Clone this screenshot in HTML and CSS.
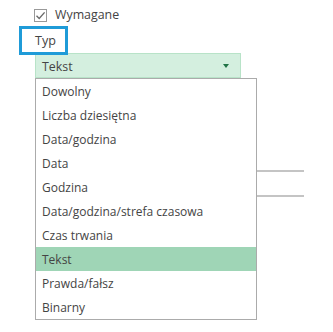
FILE: index.html
```html
<!DOCTYPE html>
<html lang="pl">
<head>
<meta charset="utf-8">
<link rel="stylesheet" href="styles.css">
</head>
<body>
<div class="panel">
  <label class="check-row">
    <span class="checkbox">
      <svg width="11" height="11" viewBox="0 0 11 11"><path d="M1.5 5.8 L4.2 8.4 L9.6 2.4" fill="none" stroke="#6a6a6a" stroke-width="1.4"/></svg>
    </span>
    <span class="check-label">Wymagane</span>
  </label>
  <div class="type-label">Typ</div>
  <div class="dropdown">
    <div class="select">
      <span>Tekst</span>
      <span class="arrow"></span>
    </div>
    <div class="menu-wrap">
      <ul class="menu">
        <li>Dowolny</li>
        <li>Liczba dziesiętna</li>
        <li>Data/godzina</li>
        <li>Data</li>
        <li>Godzina</li>
        <li>Data/godzina/strefa czasowa</li>
        <li>Czas trwania</li>
        <li class="selected">Tekst</li>
        <li>Prawda/fałsz</li>
        <li>Binarny</li>
      </ul>
      <div class="side-lines">
        <div class="side-line first"></div>
        <div class="side-line"></div>
      </div>
    </div>
  </div>
</div>
</body>
</html>
```
FILE: styles.css
```css
* { box-sizing: border-box; }
html, body { margin: 0; padding: 0; background: #fff; }
body {
  font-family: "Open Sans", "Noto Sans", sans-serif;
  font-size: 12px;
  color: #444;
}
.panel {
  padding: 8px 0 0 34px;
  width: 333px;
  height: 332px;
  overflow: hidden;
}
.check-row {
  display: flex;
  align-items: center;
  height: 14px;
  gap: 8px;
}
.checkbox {
  width: 13px;
  height: 13px;
  border: 1px solid #999;
  display: flex;
  align-items: center;
  justify-content: center;
  background: #fff;
}
.check-label { font-size: 12.4px; line-height: 14px; color: #444; }
.type-label {
  margin: 4px 0 0 -15px;
  width: 49px;
  height: 29px;
  border: 3px solid #1f9bd8;
  padding: 3px 0 0 13px;
  font-size: 12.6px;
  line-height: 18px;
  color: #444;
  position: relative;
  z-index: 1;
}
.dropdown { margin-top: -2px; margin-left: 1px; }
.select {
  width: 206px;
  height: 25px;
  background: #d4efdf;
  border: 1px solid #b8e3c8;
  display: flex;
  align-items: center;
  justify-content: space-between;
  padding: 1px 11px 0 6px;
  font-size: 12.4px;
}
.arrow {
  width: 0;
  height: 0;
  border-left: 3px solid transparent;
  border-right: 3px solid transparent;
  border-top: 4px solid #217346;
}
.menu-wrap { display: flex; align-items: flex-start; }
.menu {
  list-style: none;
  margin: 0;
  padding: 0;
  width: 222px;
  border: 1px solid #ababab;
}
.menu li {
  height: 24px;
  line-height: 26px;
  padding-left: 6px;
  font-size: 12px;
  white-space: nowrap;
  overflow: hidden;
}
.menu li.selected { background: #9fd5b6; }
.side-lines { padding-top: 92px; width: 47px; }
.side-line { height: 2px; background: #c4c4c4; }
.side-line.first { margin-bottom: 23px; }
```
